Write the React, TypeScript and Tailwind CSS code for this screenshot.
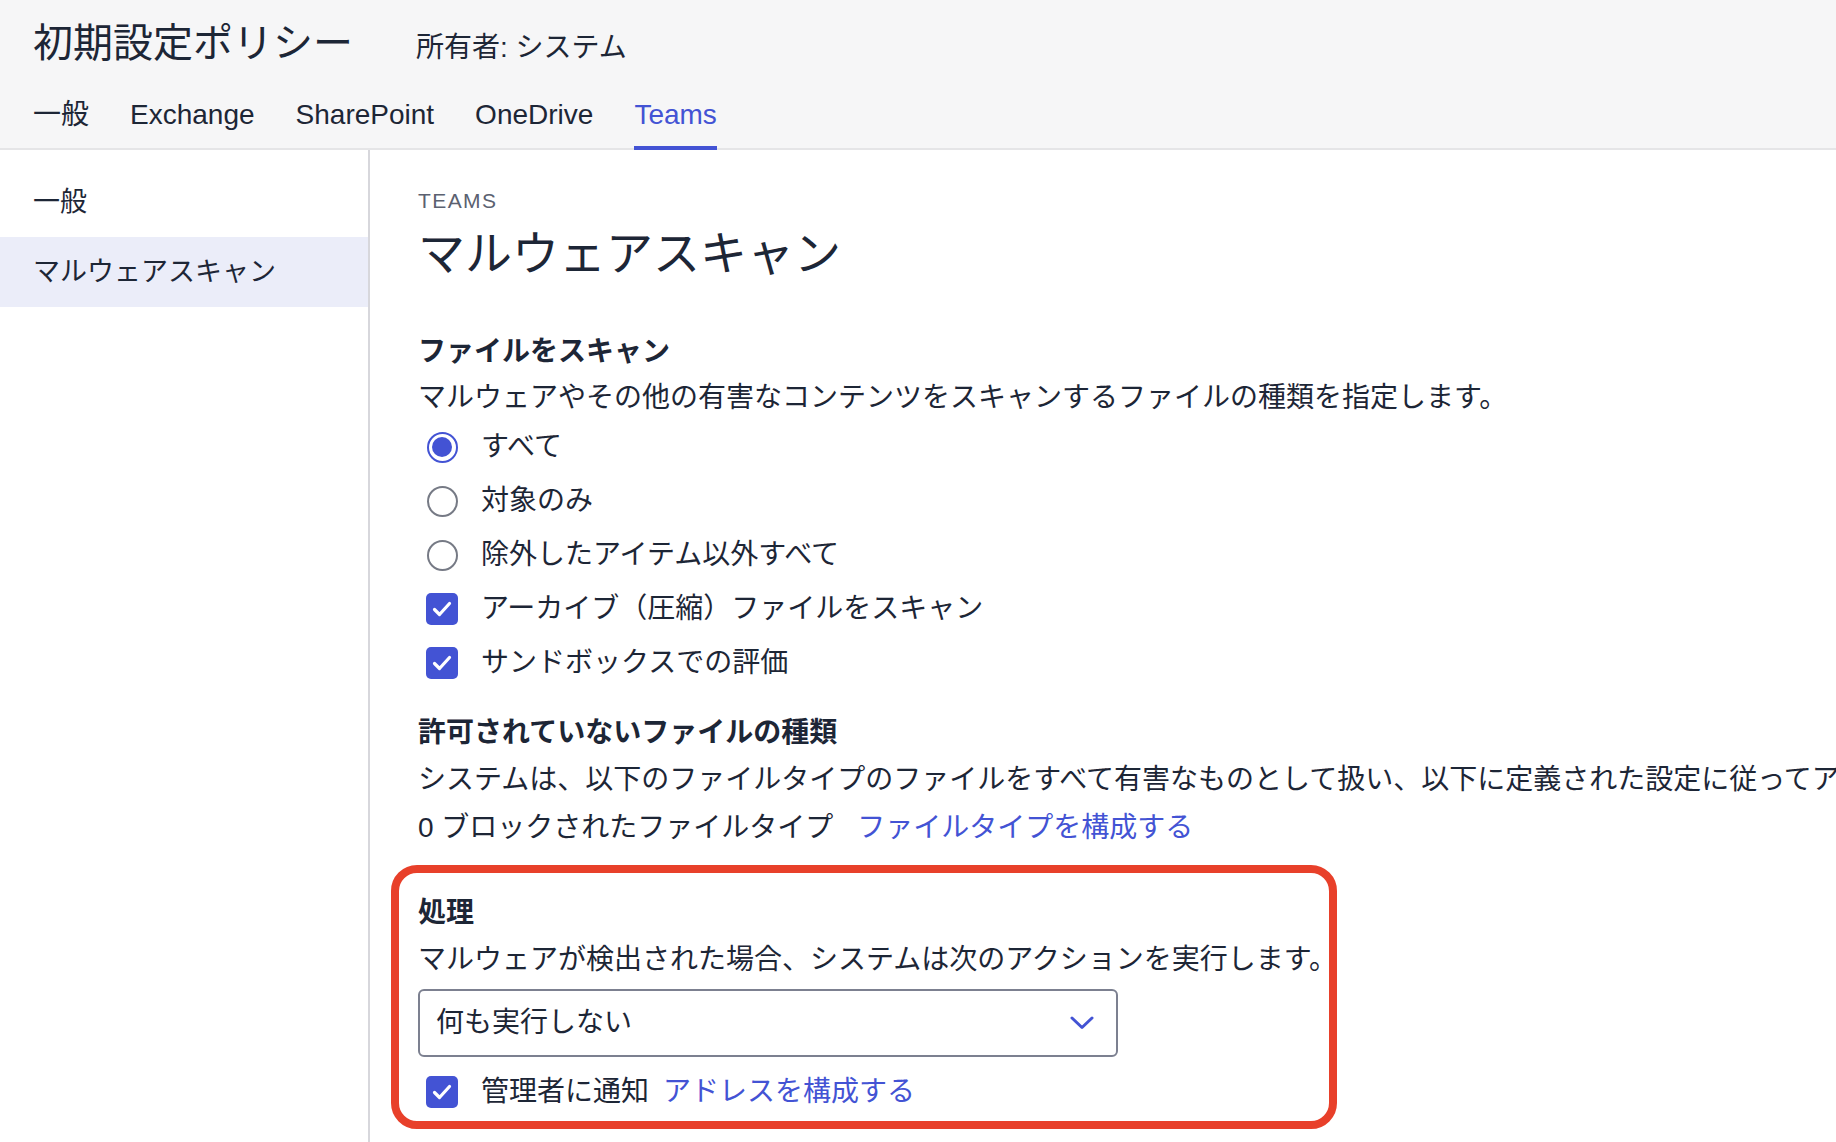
const FONT = "font-['Liberation_Sans','Noto_Sans_CJK_JP',sans-serif]";

const tabs = [
  { id: "general", label: "一般" },
  { id: "exchange", label: "Exchange" },
  { id: "sharepoint", label: "SharePoint" },
  { id: "onedrive", label: "OneDrive" },
  { id: "teams", label: "Teams" },
];

const sideItems = [
  { id: "general", label: "一般", active: false },
  { id: "malware", label: "マルウェアスキャン", active: true },
];

function Radio({ checked }: { checked: boolean }) {
  if (checked) {
    return (
      <span className="flex h-[31px] w-[31px] items-center justify-center rounded-full border-2 border-[#4353d4] bg-white">
        <span className="h-[20px] w-[20px] rounded-full bg-[#4353d4]" />
      </span>
    );
  }

  return <span className="h-[31px] w-[31px] rounded-full border-2 border-[#767a85] bg-white" />;
}

function Checkbox() {
  return (
    <span className="flex h-[32px] w-[32px] items-center justify-center rounded-[5px] bg-[#4353d4]">
      <svg width="20" height="16" viewBox="0 0 20 16" fill="none">
        <path
          d="M2.5 8.5 L7.5 13.5 L17.5 2.5"
          stroke="white"
          strokeWidth="3.2"
          strokeLinecap="round"
          strokeLinejoin="round"
        />
      </svg>
    </span>
  );
}

function OptionRow({ control, children }: { control: React.ReactNode; children: React.ReactNode }) {
  return (
    <div className="flex h-[54px] items-center">
      <div className="ml-[8px] flex w-[32px] justify-center">{control}</div>
      <div className="ml-[23px] flex items-center">{children}</div>
    </div>
  );
}

export default function App() {
  return (
    <div className={`${FONT} h-[1142px] w-[1836px] overflow-hidden bg-white text-[#1d2636]`}>
      <header className="border-b-2 border-[#e5e5e7] bg-[#f6f6f7] px-[33px]">
        <div className="flex items-baseline pt-[19px]">
          <h1 className="text-[40px] leading-[48px] text-[#1d2636]">初期設定ポリシー</h1>
          <p className="ml-[63px] text-[28px] leading-[40px] text-[#1d2636]">所有者: システム</p>
        </div>
        <nav className="mb-[-2px] mt-[30px] flex gap-[41px]">
          {tabs.map((tab) =>
            tab.id === "teams" ? (
              <span
                key={tab.id}
                className="border-b-4 border-[#4353d4] pb-[14px] text-[28px] leading-[34px] text-[#4353d4]"
              >
                {tab.label}
              </span>
            ) : (
              <span key={tab.id} className="border-b-4 border-transparent pb-[14px] text-[28px] leading-[34px]">
                {tab.label}
              </span>
            ),
          )}
        </nav>
      </header>

      <div className="flex h-[993px]">
        <aside className="w-[370px] shrink-0 border-r-2 border-[#d7d7dc] pt-[17px]">
          {sideItems.map((item) => (
            <div
              key={item.id}
              className={
                item.active
                  ? "flex h-[70px] items-center bg-[#ebedf9] px-[33px] text-[27px]"
                  : "flex h-[70px] items-center px-[33px] text-[27px]"
              }
            >
              {item.label}
            </div>
          ))}
        </aside>

        <main className="min-w-0 flex-1 overflow-hidden whitespace-nowrap pl-[48px] pt-[38px]">
          <p className="text-[21px] leading-[26px] tracking-[1.4px] text-[#5b6170]">TEAMS</p>
          <h2 className="mt-[12px] text-[47px] leading-[56px]">マルウェアスキャン</h2>

          <section className="mt-[50px]">
            <h3 className="text-[28px] font-bold leading-[40px]">ファイルをスキャン</h3>
            <p className="mt-[6px] text-[28px] leading-[40px]">
              マルウェアやその他の有害なコンテンツをスキャンするファイルの種類を指定します。
            </p>
            <div className="mt-[2px] text-[28px] leading-[40px]">
              <OptionRow control={<Radio checked />}>すべて</OptionRow>
              <OptionRow control={<Radio checked={false} />}>対象のみ</OptionRow>
              <OptionRow control={<Radio checked={false} />}>除外したアイテム以外すべて</OptionRow>
              <OptionRow control={<Checkbox />}>アーカイブ（圧縮）ファイルをスキャン</OptionRow>
              <OptionRow control={<Checkbox />}>サンドボックスでの評価</OptionRow>
            </div>
          </section>

          <section className="mt-[23px]">
            <h3 className="text-[28px] font-bold leading-[40px]">許可されていないファイルの種類</h3>
            <p className="mt-[7px] text-[28px] leading-[40px]">
              システムは、以下のファイルタイプのファイルをすべて有害なものとして扱い、以下に定義された設定に従ってアクションを実行します。
            </p>
            <p className="mt-[8px] text-[28px] leading-[40px]">
              0 ブロックされたファイルタイプ
              <a className="ml-[24px] text-[#4353d4]">ファイルタイプを構成する</a>
            </p>
          </section>

          <section className="ml-[-27px] mt-[17px] w-[946px] rounded-[26px] border-8 border-[#e8402a] pb-[2px] pl-[19px] pt-[20px]">
            <h3 className="text-[28px] font-bold leading-[40px]">処理</h3>
            <p className="mt-[7px] text-[28px] leading-[40px]">
              マルウェアが検出された場合、システムは次のアクションを実行します。
            </p>
            <div className="mt-[9px] flex h-[68px] w-[700px] items-center justify-between rounded-[6px] border-2 border-[#7c8090] pl-[16px] pr-[22px]">
              <span className="text-[28px] leading-[40px]">何も実行しない</span>
              <svg width="24" height="14" viewBox="0 0 24 14" fill="none">
                <path
                  d="M2 2 L12 11.5 L22 2"
                  stroke="#4353d4"
                  strokeWidth="3"
                  strokeLinecap="round"
                  strokeLinejoin="round"
                />
              </svg>
            </div>
            <div className="mt-[8px] text-[28px] leading-[40px]">
              <OptionRow control={<Checkbox />}>
                管理者に通知
                <a className="ml-[14px] text-[#4353d4]">アドレスを構成する</a>
              </OptionRow>
            </div>
          </section>
        </main>
      </div>
    </div>
  );
}
